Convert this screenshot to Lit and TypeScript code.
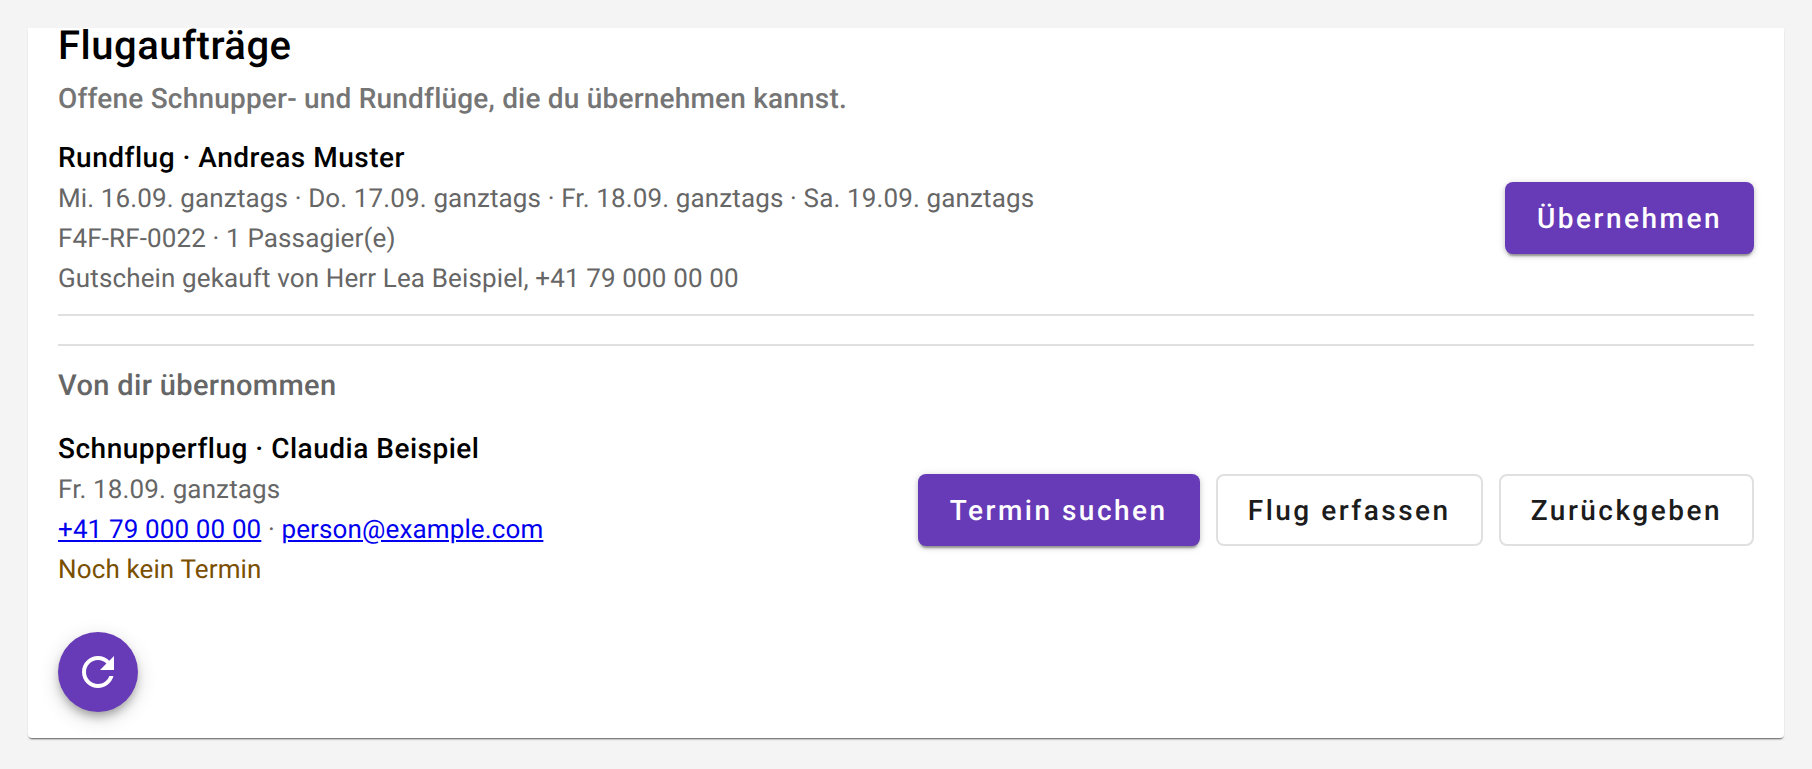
import { LitElement, html, css } from "lit";
import { customElement } from "lit/decorators.js";

@customElement("app-root")
export class AppRoot extends LitElement {
  static styles = css`
    :host { display: block; height: 769px; box-sizing: border-box; padding: 28px 28px 31px; background: #f4f4f4; font-family: Roboto, "Liberation Sans", sans-serif; overflow: hidden; text-rendering: geometricPrecision; }
    .card { box-sizing: border-box; height: 710px; background: #fff; border-radius: 0 0 4px 4px; box-shadow: 0 2px 2px -1px rgba(0,0,0,.65); padding: 0 30px; }
    h1 { margin: 0; font-size: 40px; line-height: 36px; font-weight: 500; letter-spacing: .5px; color: #000; }
    .sub { margin: 17px 0 0; font-size: 28px; line-height: 36px; font-weight: 500; letter-spacing: .2px; color: #757575; }
    .row { display: flex; justify-content: space-between; align-items: center; }
    .row.first { margin-top: 21px; padding-bottom: 16px; border-bottom: 2px solid #e0e0e0; }
    .info { margin-bottom: -1px; }
    .name { font-size: 28px; line-height: 40px; margin-bottom: 1px; font-weight: 500; letter-spacing: .5px; color: #000; }
    .line { font-size: 26px; line-height: 40px; color: #666; letter-spacing: .13px; }
    .warn { color: #7a4f00; }
    a { color: #0000ee; }
    .sep { border: 0; border-top: 2px solid #e0e0e0; margin: 28px 0 0; }
    h2 { margin: 22px 0 0; font-size: 29px; line-height: 36px; font-weight: 500; letter-spacing: .35px; color: #666; }
    .row.second { margin-top: 25px; }
    .actions { display: flex; gap: 16px; margin-top: 2px; }
    button { height: 72px; box-sizing: border-box; border-radius: 8px; font: 500 28px Roboto, sans-serif; letter-spacing: 2.5px; padding: 0 32px; cursor: pointer; text-rendering: geometricPrecision; }
    .primary { background: #673ab7; color: #fff; border: 0; box-shadow: 0 4px 2px -2px rgba(0,0,0,.3), 0 2px 4px 0 rgba(0,0,0,.16), 0 1px 8px 0 rgba(0,0,0,.12); }
    .outline { background: #fff; color: #1c1c1c; border: 2px solid #e0e0e0; padding: 0 30px; }
    .fab { display: flex; align-items: center; justify-content: center; width: 80px; height: 80px; padding: 0; margin-top: 43px; border-radius: 50%; border: 0; background: #673ab7; box-shadow: 0 6px 10px -2px rgba(0,0,0,.3), 0 6px 20px 0 rgba(0,0,0,.16); }
    .fab svg { width: 48px; height: 48px; fill: #fff; display: block; }
  `;

  render() {
    return html`
      <div class="card">
        <h1>Flugaufträge</h1>
        <p class="sub">Offene Schnupper- und Rundflüge, die du übernehmen kannst.</p>
        <div class="row first">
          <div class="info">
            <div class="name">Rundflug · Andreas Muster</div>
            <div class="line">Mi. 16.09. ganztags · Do. 17.09. ganztags · Fr. 18.09. ganztags · Sa. 19.09. ganztags</div>
            <div class="line">F4F-RF-0022 · 1 Passagier(e)</div>
            <div class="line">Gutschein gekauft von Herr Lea Beispiel, +41 79 000 00 00</div>
          </div>
          <button class="primary">Übernehmen</button>
        </div>
        <hr class="sep" />
        <h2>Von dir übernommen</h2>
        <div class="row second">
          <div class="info">
            <div class="name">Schnupperflug · Claudia Beispiel</div>
            <div class="line">Fr. 18.09. ganztags</div>
            <div class="line"><a href="#">+41 79 000 00 00</a> · <a href="#">person@example.com</a></div>
            <div class="line warn">Noch kein Termin</div>
          </div>
          <div class="actions">
            <button class="primary">Termin suchen</button>
            <button class="outline">Flug erfassen</button>
            <button class="outline">Zurückgeben</button>
          </div>
        </div>
        <button class="fab" aria-label="Aktualisieren">
          <svg viewBox="0 0 24 24"><path d="M17.65 6.35C16.2 4.9 14.21 4 12 4c-4.42 0-7.99 3.58-7.99 8s3.57 8 7.99 8c3.73 0 6.84-2.55 7.73-6h-2.08c-.82 2.33-3.04 4-5.65 4-3.31 0-6-2.69-6-6s2.69-6 6-6c1.66 0 3.14.69 4.22 1.78L13 11h7V4l-2.35 2.35z"/></svg>
        </button>
      </div>
    `;
  }
}
